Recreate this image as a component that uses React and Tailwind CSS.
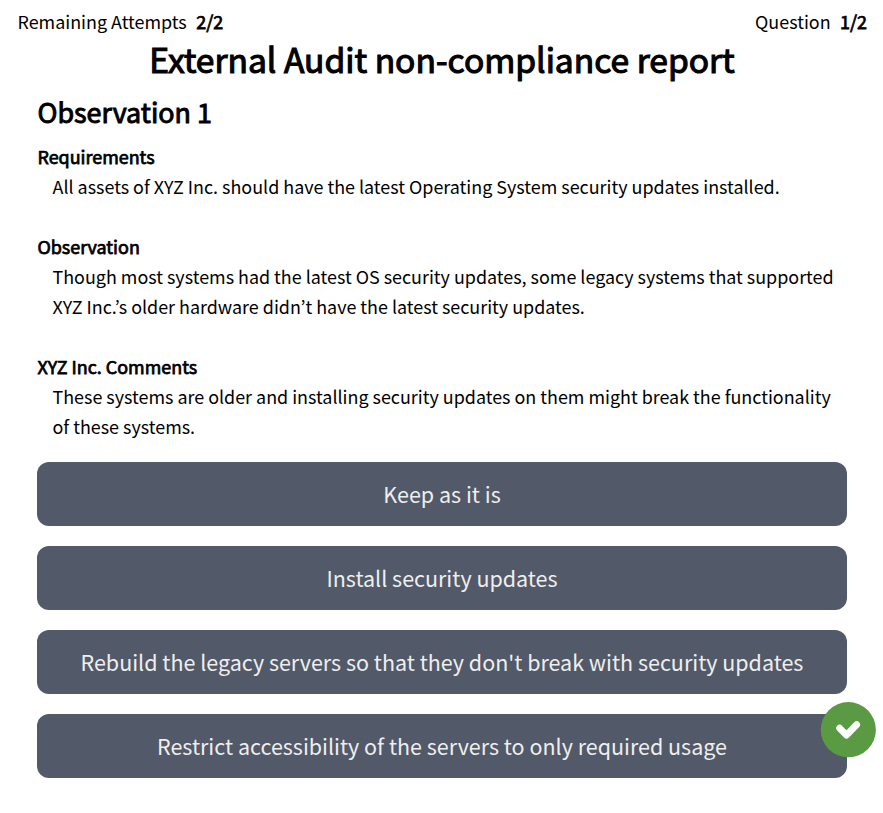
function Section({ title, children }) {
  return (
    <section className="mb-[30px] leading-[30px]">
      <h3 className="pl-[0.5px] [-webkit-text-stroke:0.75px_black]">{title}</h3>
      <p className="pl-[15.5px]">{children}</p>
    </section>
  );
}

function Choice({ children }) {
  return (
    <button className="relative flex h-16 w-full items-center justify-center rounded-xl bg-[#525968] pt-px text-[21.49px] text-[#eeeeee]">
      {children}
    </button>
  );
}

function Counter({ label, value }) {
  return (
    <div className="flex gap-[9.5px]">
      <span>{label}</span>
      <span className="[-webkit-text-stroke:0.75px_black]">{value}</span>
    </div>
  );
}

export default function App() {
  return (
    <main className="h-[813px] w-[883px] overflow-hidden bg-white font-['Noto_Sans_CJK_KR',sans-serif] text-[17.91px] text-black">
      <header className="flex h-[43px] items-center justify-between pl-[17.5px] pr-4">
        <Counter label="Remaining Attempts" value="2/2" />
        <Counter label="Question" value="1/2" />
      </header>
      <h1 className="h-8 pl-px text-center text-[33.57px] leading-8 [-webkit-text-stroke:1.12px_black]">External Audit non-compliance report</h1>
      <div className="pl-[37px] pr-9">
        <h2 className="mt-4 mb-2 pl-[0.5px] text-[26.86px] leading-[42px] [-webkit-text-stroke:0.95px_black]">Observation 1</h2>
        <Section title="Requirements">
          All assets of XYZ Inc. should have the latest Operating System security updates installed.
        </Section>
        <Section title="Observation">
          Though most systems had the latest OS security updates, some legacy systems that supported XYZ Inc.’s older hardware didn’t have the latest security updates.
        </Section>
        <Section title="XYZ Inc. Comments">
          These systems are older and installing security updates on them might break the functionality of these systems.
        </Section>
        <div className="-mt-[9px] flex flex-col gap-5">
          <Choice>Keep as it is</Choice>
          <Choice>Install security updates</Choice>
          <Choice>Rebuild the legacy servers so that they don't break with security updates</Choice>
          <Choice>
            Restrict accessibility of the servers to only required usage
            <svg viewBox="0 0 56 56" className="absolute -top-3 -right-[29px] size-14">
              <circle cx="28.3" cy="27.7" r="27.6" fill="#5a9a43" />
              <path d="M19.6 26.2 L26.5 33.2 L36.7 22.7" fill="none" stroke="white" strokeWidth="6.8" strokeLinecap="round" strokeLinejoin="round" />
            </svg>
          </Choice>
        </div>
      </div>
    </main>
  );
}
